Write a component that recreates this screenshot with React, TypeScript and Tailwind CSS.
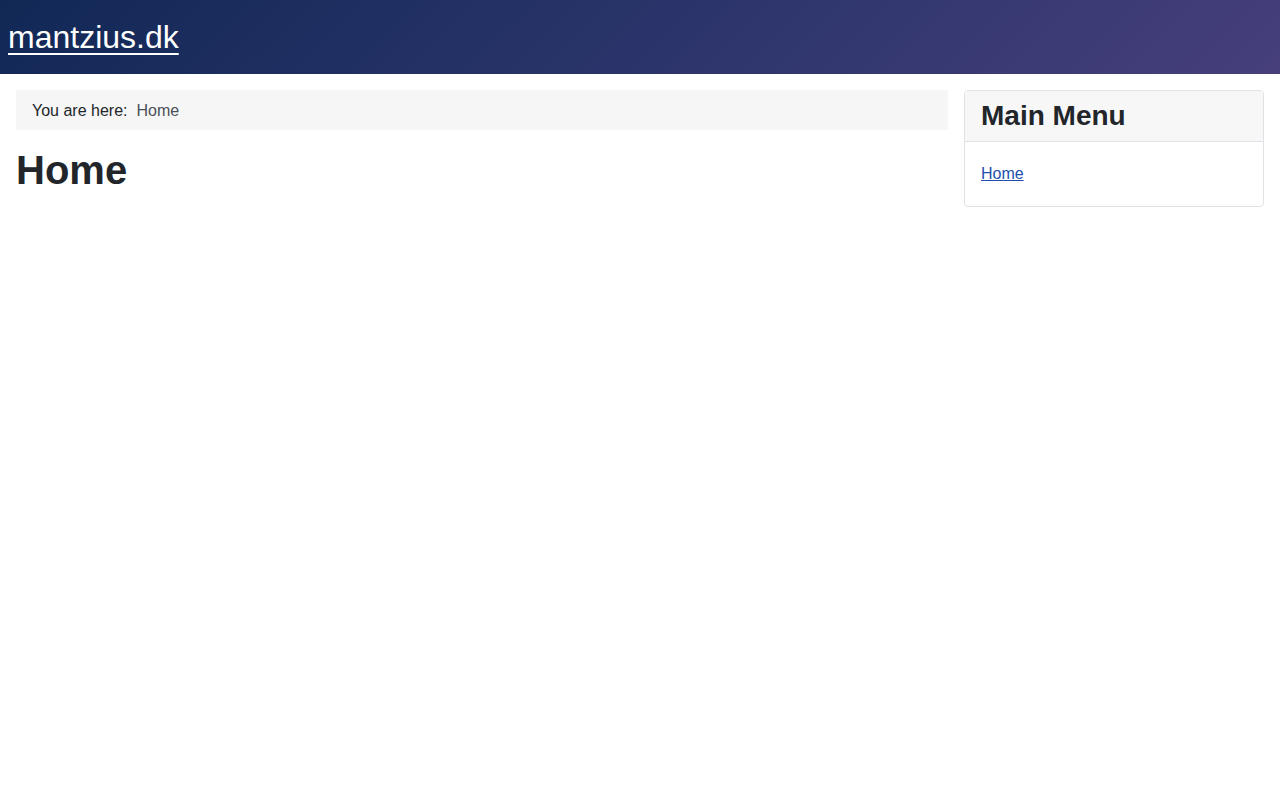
export default function App() {
  return (
    <div className="min-h-screen bg-white font-['Liberation_Sans',Arial,sans-serif] text-[#22262a]">
      {/* Header */}
      <header className="h-[74px] bg-[linear-gradient(135deg,#112855_0%,#2a346a_50%,#463f7c_100%)] flex items-center px-2">
        <a href="#" className="text-[32px] leading-none text-white underline decoration-2 underline-offset-[5px] -mt-[1px]">
          mantzius.dk
        </a>
      </header>

      <div className="flex gap-4 px-4 pt-4">
        <main className="flex-1 min-w-0">
          <nav className="h-10 bg-[#f6f6f6] flex items-center px-4 pt-px text-base">
            <span className="text-[#22262a]">You are here:</span>
            <span className="ml-[9px] text-[#495057]">Home</span>
          </nav>
          <h1 className="mt-4 text-[40px] leading-[1.2] font-bold text-[#22262a]">Home</h1>
        </main>

        <aside className="w-[300px] shrink-0">
          <div className="border border-[#dfe3e7] rounded-[4px] overflow-hidden">
            <div className="bg-[#f7f7f7] border-b border-[#dfe3e7] px-4 h-[51px] flex items-center">
              <h3 className="text-[28px] leading-none font-bold text-[#22262a]">Main Menu</h3>
            </div>
            <div className="px-4 py-5">
              <a href="#" className="block w-fit text-base leading-6 text-[#224faa] underline">
                Home
              </a>
            </div>
          </div>
        </aside>
      </div>
    </div>
  )
}
